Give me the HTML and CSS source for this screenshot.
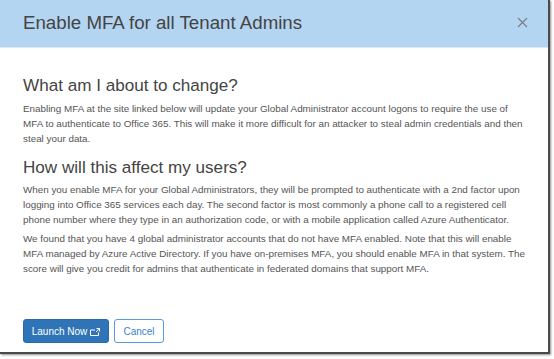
FILE: index.html
```html
<!DOCTYPE html>
<html>
<head>
<meta charset="utf-8">
<link rel="stylesheet" href="styles.css">
</head>
<body>
<div class="dialog">
  <div class="header">
    <h1 class="title">Enable MFA for all Tenant Admins</h1>
    <span class="close" aria-label="Close">
      <svg width="11" height="11" viewBox="0 0 11 11"><path d="M1 1 L10 10 M10 1 L1 10" stroke="#7a7f86" stroke-width="1.2" fill="none"/></svg>
    </span>
  </div>
  <div class="content">
    <h2 class="heading">What am I about to change?</h2>
    <p class="text p1">Enabling MFA at the site linked below will update your Global Administrator account logons to require the use of<br>MFA to authenticate to Office 365. This will make it more difficult for an attacker to steal admin credentials and then<br>steal your data.</p>
    <h2 class="heading h2">How will this affect my users?</h2>
    <p class="text p2">When you enable MFA for your Global Administrators, they will be prompted to authenticate with a 2nd factor upon<br>logging into Office 365 services each day. The second factor is most commonly a phone call to a registered cell<br>phone number where they type in an authorization code, or with a mobile application called Azure Authenticator.</p>
    <p class="text p3">We found that you have 4 global administrator accounts that do not have MFA enabled. Note that this will enable<br>MFA managed by Azure Active Directory. If you have on-premises MFA, you should enable MFA in that system. The<br>score will give you credit for admins that authenticate in federated domains that support MFA.</p>
  </div>
  <div class="footer">
    <button class="btn btn-primary">Launch Now<svg class="ext" width="10" height="8" viewBox="0 0 10 8"><path d="M0.5 2 H5 M0.5 2 V7.5 H8.5 V4.5" stroke="#fff" stroke-width="1" fill="none"/><path d="M6.5 0.5 H9.5 V3.5 M9.5 0.5 L6 4" stroke="#fff" stroke-width="1" fill="none"/></svg></button>
    <button class="btn btn-secondary">Cancel</button>
  </div>
</div>
</body>
</html>
```
FILE: styles.css
```css
html, body {
  margin: 0;
  padding: 0;
  background: #ffffff;
}
body {
  width: 554px;
  height: 359px;
  overflow: hidden;
  font-family: "Liberation Sans", Arial, sans-serif;
}
.dialog {
  width: 550px;
  height: 354px;
  box-sizing: border-box;
  background: #fff;
  border-right: 2px solid #4a4a4a;
  border-bottom: 2px solid #4a4a4a;
  box-shadow: 1px 1px 2px rgba(0,0,0,0.45);
  display: flex;
  flex-direction: column;
}
.header {
  height: 47px;
  background: #b3d5f1;
  border-bottom: 1px solid #d8eaf8;
  display: flex;
  align-items: center;
  justify-content: space-between;
  padding: 0 20px 0 23px;
  flex-shrink: 0;
}
.title {
  margin: 0;
  font-size: 18.7px;
  font-weight: normal;
  color: #444;
  padding-bottom: 2px;
}
.close {
  display: flex;
  width: 11px;
  height: 11px;
  margin-bottom: 2px;
}
.content {
  padding: 27px 10px 0 23px;
  flex: 1;
}
.heading {
  margin: 0;
  font-size: 17.1px;
  font-weight: normal;
  color: #444;
  line-height: 22px;
}
.text {
  margin: 0;
  font-size: 9.85px;
  line-height: 15px;
  color: #555;
  white-space: nowrap;
}
.p1 {
  margin-top: 4px;
}
.h2 {
  margin-top: 11px;
}
.p2 {
  margin-top: 3px;
}
.p3 {
  margin-top: 4px;
}
.footer {
  display: flex;
  gap: 5px;
  padding: 0 23px 9px 23px;
}
.btn {
  height: 24px;
  font-family: "Liberation Sans", Arial, sans-serif;
  font-size: 10px;
  border-radius: 3px;
  display: flex;
  align-items: center;
  justify-content: center;
  cursor: pointer;
}
.btn-primary {
  width: 86px;
  background: #2f74b7;
  color: #fff;
  border: 1px solid #2a6aa8;
  padding: 0;
}
.ext {
  margin-left: 3px;
  margin-top: 2px;
}
.btn-secondary {
  width: 50px;
  background: #fff;
  color: #3c82cc;
  border: 1px solid #5a9ade;
  padding: 0;
}
```
